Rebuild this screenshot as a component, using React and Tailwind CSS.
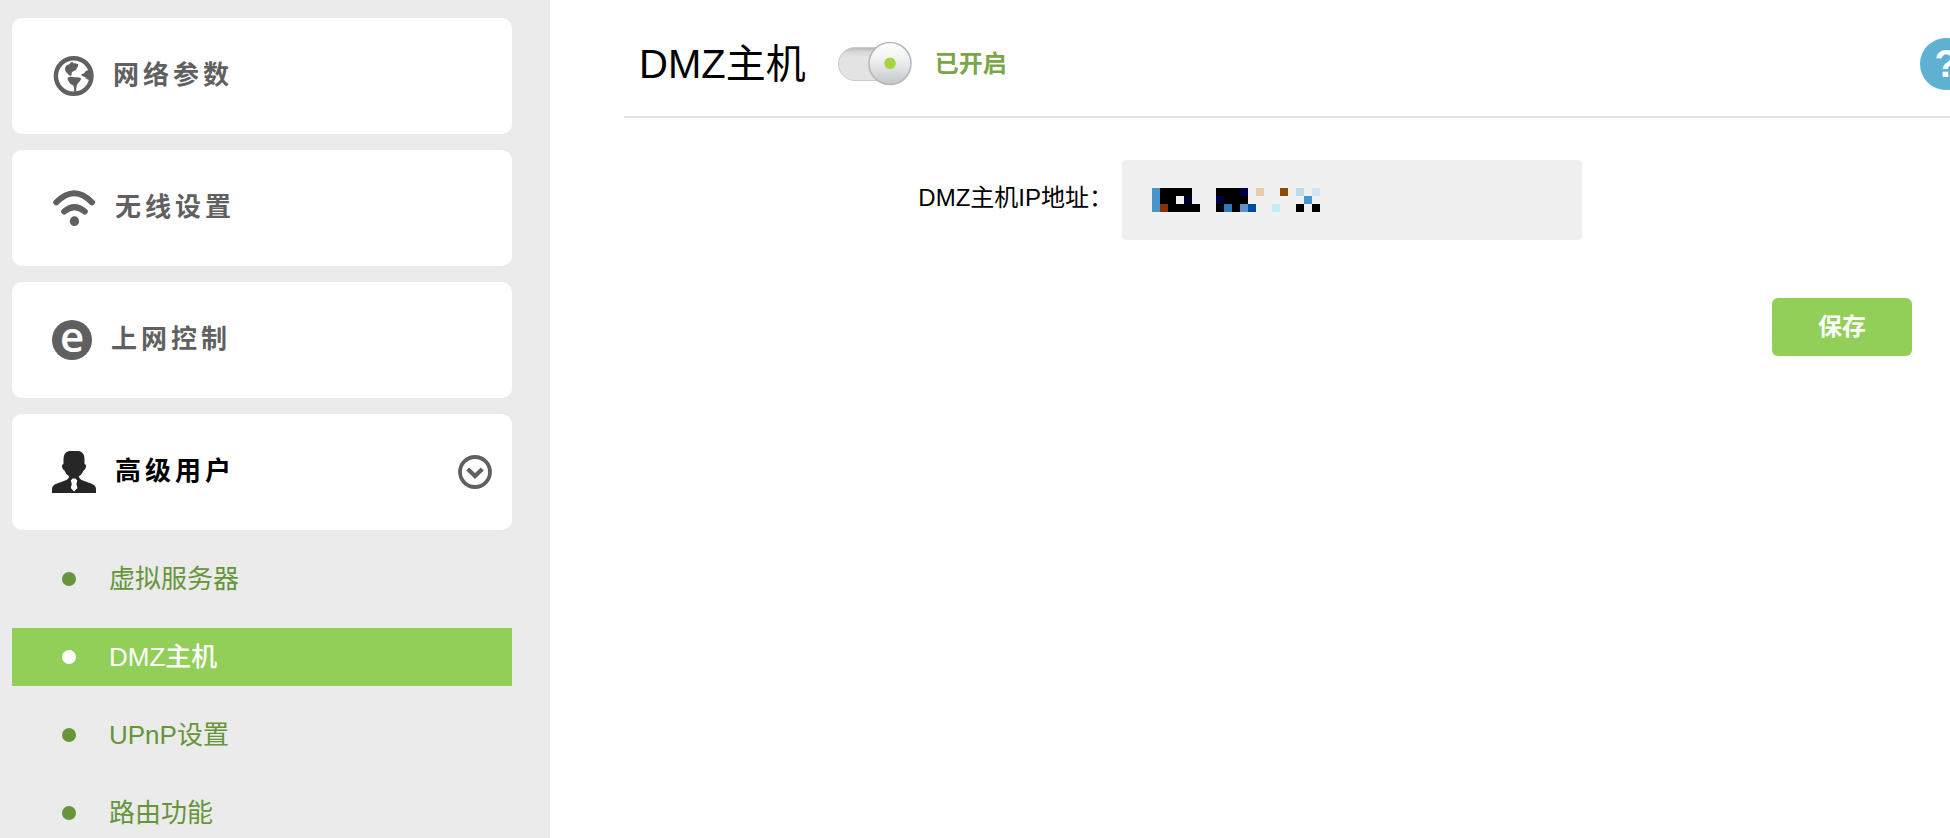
import React from "react";

function GlobeIcon() {
  return (
    <svg width="42" height="40" viewBox="0 0 42 40" fill="#606060" aria-hidden="true">
      <circle cx="21.7" cy="20" r="17.8" fill="none" stroke="#606060" strokeWidth="4.4" />
      <path d="M13 13 Q13.2 9.5 16 8.8 Q18 8.6 18.6 6.6 Q20.4 5 21.6 7.4 Q24 7.2 26.2 8.2 Q26.6 10.5 25 12 Q24.4 14.6 22 15 Q19.8 15.6 19.6 17 Q20.2 19 19 19.8 Q16.6 19.6 15.6 17.4 Q13.2 16 13 13 Z" />
      <path d="M15.6 22 Q17.4 20.2 20 20.8 Q22.6 21.6 24 21.2 Q27 21.4 29 22 Q29.2 24.6 27.2 26 Q25.4 27.4 24.8 29.4 Q24 31.4 24.2 36 H22.2 Q22.4 32 21.4 29.6 Q18 28.4 16.8 25.8 Q15.4 24.4 15.6 22 Z" />
      <path d="M38.5 11.5 Q36.2 14.8 33.6 15.2 Q32.6 17.6 29.4 18.2 Q29 20 31.4 20.4 Q33.6 20.6 34 22.4 Q36 24 38.5 24 Z" />
    </svg>
  );
}

function WifiIcon() {
  return (
    <svg width="44" height="36" viewBox="0 0 44 36" fill="none" stroke="#606060" strokeLinecap="round" aria-hidden="true">
      <path d="M4.3 12.3 Q22.2 -6 40 12.3" strokeWidth="6" />
      <path d="M12.2 21.6 Q22.4 12.6 32.8 21.6" strokeWidth="6" />
      <ellipse cx="22.4" cy="31.2" rx="4.6" ry="4.9" fill="#606060" stroke="none" />
    </svg>
  );
}

function ExplorerIcon() {
  return (
    <span
      aria-hidden="true"
      className="flex h-10 w-10 items-center justify-center rounded-full bg-[#606060] pb-2 font-['Open_Sans','Noto_Sans',sans-serif] text-[42px] leading-[56px] font-semibold text-white"
    >
      e
    </span>
  );
}

function UserIcon() {
  return (
    <svg width="44" height="42" viewBox="0 0 44 42" aria-hidden="true">
      <path
        d="M17 0 H27 Q32.5 1.5 32.5 8 V13 Q34.8 13.6 33.8 16.6 Q33 19 31.6 19.4 Q30 23.5 26.8 25.6 Q27.4 28.4 31.5 29.8 L39 32.4 Q44 34.2 44 38 V42 H0 V38 Q0 34.2 5 32.4 L12.5 29.8 Q16.6 28.4 17.2 25.6 Q14 23.5 12.4 19.4 Q11 19 10.2 16.6 Q9.2 13.6 11.5 13 V8 Q11.5 1.5 17 0 Z"
        fill="#262626"
      />
      <path d="M20.5 27.5 H23.5 L25.3 29.5 L24.4 33 L25.5 37 L22 40.5 L18.8 37 L19.8 33 L18.8 29.5 Z" fill="#fff" />
    </svg>
  );
}

function ExpandIcon() {
  return (
    <svg className="ml-auto" width="34" height="34" viewBox="0 0 34 34" fill="none" stroke="#606060" aria-hidden="true">
      <circle cx="17" cy="17" r="15" strokeWidth="3.8" />
      <path d="M9.7 14 L17 21 L24.3 14" strokeWidth="4.2" />
    </svg>
  );
}

const MENU = [
  { label: "网络参数", Icon: GlobeIcon },
  { label: "无线设置", Icon: WifiIcon },
  { label: "上网控制", Icon: ExplorerIcon },
  { label: "高级用户", Icon: UserIcon, open: true },
];

const SUBMENU = [
  { label: "虚拟服务器" },
  { label: "DMZ主机", active: true },
  { label: "UPnP设置" },
  { label: "路由功能" },
];

function Sidebar() {
  return (
    <nav className="w-[550px] shrink-0 bg-[#ebebeb] pt-[18px] pr-[38px] pl-3">
      <ul className="flex flex-col gap-4">
        {MENU.map(({ label, Icon, open }) => (
          <li key={label}>
            <a
              href="#"
              className={
                "flex h-[116px] items-center gap-[19px] rounded-[10px] bg-white pr-5 pl-10 text-[26px] leading-8 font-bold " +
                (open ? "text-black" : "text-[#606060]")
              }
            >
              <Icon />
              <span className="pb-0.5 tracking-[4px]">{label}</span>
              {open && <ExpandIcon />}
            </a>
          </li>
        ))}
      </ul>
      <ul className="mt-5 flex flex-col gap-5">
        {SUBMENU.map(({ label, active }) => (
          <li key={label}>
            <a
              href="#"
              className={
                "flex h-[58px] items-center gap-[33px] pl-[50px] text-[26px] leading-8 " +
                (active ? "bg-[#91cf58] font-medium text-white" : "text-[#66953a]")
              }
            >
              <span className={"h-3.5 w-3.5 rounded-full " + (active ? "bg-white" : "bg-[#66953a]")} />
              <span>{label}</span>
            </a>
          </li>
        ))}
      </ul>
    </nav>
  );
}

function Toggle() {
  return (
    <label className="ml-8 flex cursor-pointer items-center gap-[23px]">
      <input type="checkbox" defaultChecked aria-label="DMZ主机" className="sr-only" />
      <svg width="74" height="46" viewBox="0 0 74 46" aria-hidden="true">
        <defs>
          <linearGradient id="track" x1="0" y1="0" x2="0" y2="1">
            <stop offset="0" stopColor="#b4b4b4" />
            <stop offset="0.14" stopColor="#d9d9d9" />
            <stop offset="0.3" stopColor="#e3e3e3" />
            <stop offset="1" stopColor="#e3e3e3" />
          </linearGradient>
          <linearGradient id="knob" x1="0" y1="0" x2="0" y2="1">
            <stop offset="0" stopColor="#ffffff" />
            <stop offset="0.35" stopColor="#f3f4f4" />
            <stop offset="1" stopColor="#c4c6ca" />
          </linearGradient>
        </defs>
        <rect x="0.5" y="6.5" width="68" height="33" rx="16.5" fill="url(#track)" stroke="#cbcbcb" />
        <circle cx="52" cy="22.5" r="21" fill="url(#knob)" stroke="#b8b8b8" strokeWidth="1.6" />
        <circle cx="52" cy="22.3" r="5.8" fill="#a6d443" />
      </svg>
      <span className="text-2xl leading-8 font-bold text-[#7aa649]">已开启</span>
    </label>
  );
}

const MOSAIC = [
  [[0, 1, "#4a94cb"], [1, 4, "#000"], [8, 3, "#000"], [11, 1, "#000042"], [13, 1, "#e9ccab"], [16, 1, "#8a4a05"], [18, 1, "#bbdcea"], [20, 1, "#d2e6f2"]],
  [[0, 1, "#4a94cb"], [1, 2, "#000"], [4, 1, "#00002c"], [8, 1, "#000042"], [9, 3, "#000"], [19, 1, "#4a94cb"]],
  [[0, 1, "#4a94cb"], [1, 1, "#8a3005"], [2, 4, "#000"], [8, 1, "#000"], [9, 1, "#2f7ab4"], [10, 1, "#000"], [11, 1, "#6192c5"], [12, 1, "#0049a0"], [15, 1, "#c3ebf2"], [18, 1, "#000"], [20, 1, "#000"]],
];

function MaskedAddress() {
  return (
    <svg className="pointer-events-none absolute top-7 left-[30px]" width="168" height="24" viewBox="0 0 168 24" shapeRendering="crispEdges" aria-hidden="true">
      {MOSAIC.map((row, y) =>
        row.map(([x, span, color]) => (
          <rect key={x + "-" + y} x={x * 8} y={y * 8} width={span * 8} height="8" fill={color} />
        ))
      )}
    </svg>
  );
}

export default function App() {
  return (
    <div className="flex h-screen overflow-hidden bg-white font-['Liberation_Sans','Noto_Sans_CJK_SC',sans-serif] text-black">
      <Sidebar />
      <main className="min-w-0 flex-1 overflow-hidden pl-[74px]">
        <header className="flex h-[118px] items-center border-b-2 border-[#e2e2e2] pt-3 pl-[15px]">
          <h1 className="text-[40px] leading-[48px]">DMZ主机</h1>
          <Toggle />
          <button
            type="button"
            aria-label="帮助"
            className="-mr-[22px] ml-auto flex h-[52px] w-[52px] items-center justify-center rounded-full bg-[#5eb1d0] text-[38px] leading-[52px] font-bold text-white"
          >
            ?
          </button>
        </header>
        <form onSubmit={(e) => e.preventDefault()}>
          <div className="mt-[42px] flex gap-[9px]">
            <label htmlFor="dmz-ip" className="w-[489px] pt-[22px] text-right text-2xl leading-8">
              DMZ主机IP地址：
            </label>
            <div className="relative w-[460px]">
              <input id="dmz-ip" type="text" className="h-20 w-full rounded bg-[#f0f0f0] px-[30px] text-2xl outline-none" />
              <MaskedAddress />
            </div>
          </div>
          <div className="mt-[58px] flex justify-end pr-[38px]">
            <button type="submit" className="h-[58px] w-[140px] rounded-md bg-[#91cf58] text-2xl font-bold text-white">
              保存
            </button>
          </div>
        </form>
      </main>
    </div>
  );
}
